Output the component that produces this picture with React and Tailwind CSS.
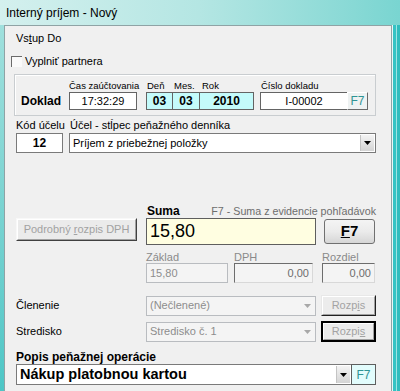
import React from "react";

function Tri({ color = "#000" }) {
  return (
    <svg width="7" height="4" viewBox="0 0 7 4">
      <path d="M0 0h7L3.5 4z" fill={color} />
    </svg>
  );
}

function ArrowBtn() {
  return (
    <div className="w-[14px] my-[1px] mr-[1px] flex items-center justify-center bg-gradient-to-b from-[#f4f4f4] to-[#d4d4d4] border-l border-[#c4c4c4]">
      <Tri />
    </div>
  );
}

function Label({ children, className = "" }) {
  return <div className={"h-[12px] leading-[12px] text-[9.5px] whitespace-nowrap " + className}>{children}</div>;
}

function DisabledCombo({ text }) {
  return (
    <div className="flex h-[20px] w-[170px] bg-[#f4f4f4] border border-[#b9bcc0]">
      <div className="flex-1 flex items-center pl-[3px] text-[#8d8d8d]">{text}</div>
      <div className="w-[16px] flex items-center justify-center">
        <Tri color="#a8a8a8" />
      </div>
    </div>
  );
}

function RozpisBtn({ focused }) {
  return (
    <div
      className={
        "ml-[5px] w-[55px] h-[21px] flex items-center justify-center text-[#a3a3a3] bg-[#ececec] " +
        (focused
          ? "border-2 border-black"
          : "border border-t-[#e8e8e8] border-l-[#e8e8e8] border-b-[#202020] border-r-[#202020]")
      }
    >
      <span className="h-full w-full flex items-center justify-center border border-t-white border-l-white border-b-[#a0a0a0] border-r-[#a0a0a0]">
        {focused ? (
          <>
            Rozpi<span className="underline">s</span>
          </>
        ) : (
          <>
            Rozp<span className="underline">i</span>s
          </>
        )}
      </span>
    </div>
  );
}

export default function App() {
  return (
    <div className="w-[400px] h-[391px] overflow-hidden flex flex-col bg-[#4fc8c8] font-['Liberation_Sans',Arial,sans-serif] text-[11px] text-black">
      <div className="h-[25px] shrink-0 flex items-center pl-[6px] bg-gradient-to-r from-[#d4f0ee] via-[#b4e6e3] to-[#79d5d1]">
        <span className="text-[12px] leading-none">Interný príjem - Nový</span>
      </div>

      <div className="flex flex-1 min-h-0">
        <div className="w-[4px] bg-gradient-to-b from-[#9fe0dd] to-[#4cc6c6]" />

        <div className="w-[388px] bg-[#f0f0f0] border-t border-l border-r border-[#8fa3a5] flex flex-col">
          <div className="mt-[6px] ml-[11px] h-[13px] leading-[13px]">
            Vs<span className="underline">t</span>up Do
          </div>

          <div className="mt-[10px] h-[13px] flex items-center">
            <div className="ml-[6px] w-[11px] h-[11px] bg-[#fafafa] border-t border-l border-[#6b6b6b]" />
            <span className="ml-[3px]">Vyplniť partnera</span>
          </div>

          <div className="mt-[6px] ml-[9px] w-[362px] h-[42px] border border-[#c9cdd0] shadow-[inset_1px_1px_0_#ffffff] flex items-start pt-[5px]">
            <div className="ml-[6px] w-[40px] flex flex-col">
              <div className="h-[12px]" />
              <div className="h-[18px] flex items-center font-bold text-[12px]">Doklad</div>
            </div>

            <div className="ml-[8px] w-[68px] flex flex-col">
              <Label>Čas zaúčtovania</Label>
              <div className="h-[18px] bg-white border border-[#646464] flex items-center justify-center text-[11px]">
                17:32:29
              </div>
            </div>

            <div className="ml-[9px] flex">
              <div className="w-[27px] flex flex-col">
                <Label className="pl-[1px]">Deň</Label>
                <div className="h-[18px] bg-[#c4fbfb] border border-[#646464] flex items-center justify-center font-bold text-[12px]">03</div>
              </div>
              <div className="w-[28px] -ml-[1px] flex flex-col">
                <Label className="pl-[2px]">Mes.</Label>
                <div className="h-[18px] bg-[#c4fbfb] border border-[#646464] flex items-center justify-center font-bold text-[12px]">03</div>
              </div>
              <div className="w-[55px] -ml-[1px] flex flex-col">
                <Label className="pl-[3px]">Rok</Label>
                <div className="h-[18px] bg-[#c4fbfb] border border-[#646464] flex items-center justify-center font-bold text-[12px]">2010</div>
              </div>
            </div>

            <div className="ml-[6px] flex flex-col">
              <Label className="pl-[1px]">Číslo dokladu</Label>
              <div className="flex h-[18px]">
                <div className="w-[88px] bg-white border border-[#646464] flex items-center justify-center">I-00002</div>
                <div className="w-[21px] -ml-[1px] bg-[#eef2f2] border border-t-white border-l-white border-b-[#6a6a6a] border-r-[#6a6a6a] flex items-center justify-center text-[#2e9494] text-[12px]">
                  F7
                </div>
              </div>
            </div>
          </div>

          <div className="mt-[3px] h-[12px] leading-[12px] flex">
            <span className="ml-[11px] w-[54px]">Kód účelu</span>
            <span>Účel - stĺpec peňažného denníka</span>
          </div>

          <div className="mt-[2px] flex">
            <div className="ml-[11px] w-[47px] h-[20px] bg-white border border-[#7a7a7a] flex items-center justify-center font-bold text-[12px]">
              12
            </div>
            <div className="ml-[6px] flex h-[20px] w-[307px] bg-white border border-[#7a7a7a]">
              <div className="flex-1 flex items-center pl-[3px]">Príjem z priebežnej položky</div>
              <ArrowBtn />
            </div>
          </div>

          <div className="mt-[52px] h-[13px] leading-[13px] w-[371px] flex">
            <span className="ml-[142px] font-bold text-[12px]">Suma</span>
            <span className="ml-auto text-[#6d6d6d] text-[10.7px]">F7 - Suma z evidencie pohľadávok</span>
          </div>

          <div className="flex items-start h-[27px]">
            <div className="ml-[11px] w-[121px] h-[23px] bg-[#ebebeb] border border-t-[#f8f8f8] border-l-[#f8f8f8] border-b-[#404040] border-r-[#404040]">
              <div className="h-full w-full flex items-center justify-center text-[#a2a2a2] border border-t-white border-l-white border-b-[#a0a0a0] border-r-[#a0a0a0]">
                Podrobný <span className="underline ml-[3px]">r</span>ozpis DPH
              </div>
            </div>
            <div className="ml-[9px] w-[170px] h-[27px] bg-[#fffee1] border border-[#5e5e5e] flex items-center pl-[3px] text-[18px]">
              15,80
            </div>
            <div className="ml-[8px] mt-[1px] w-[51px] h-[25px] rounded-[3px] border border-[#707070] bg-gradient-to-b from-[#f4f4f4] via-[#ebebeb] to-[#d6d6d6] flex items-center justify-center font-bold text-[15px]">
              <span className="underline">F</span>7
            </div>
          </div>

          <div className="mt-[6px] h-[12px] leading-[12px] flex text-[#8a8a8a]">
            <span className="ml-[141px] w-[88px]">Základ</span>
            <span className="w-[88px]">DPH</span>
            <span>Rozdiel</span>
          </div>

          <div className="flex h-[20px]">
            <div className="ml-[141px] w-[82px] bg-[#f4f4f4] border border-[#b9bcc0] flex items-center pl-[3px] text-[#8d8d8d]">
              15,80
            </div>
            <div className="ml-[6px] w-[79px] bg-[#f4f4f4] border border-t-[#6d6d6d] border-l-[#6d6d6d] border-b-[#d8d8d8] border-r-[#d8d8d8] flex items-center justify-end pr-[3px] text-[#6d6d6d]">
              0,00
            </div>
            <div className="ml-[9px] w-[53px] bg-[#f4f4f4] border border-t-[#6d6d6d] border-l-[#6d6d6d] border-b-[#d8d8d8] border-r-[#d8d8d8] flex items-center justify-end pr-[3px] text-[#6d6d6d]">
              0,00
            </div>
          </div>

          <div className="mt-[12px] h-[21px] flex items-center">
            <span className="ml-[11px] w-[130px]">Členenie</span>
            <DisabledCombo text="(Nečlenené)" />
            <RozpisBtn />
          </div>

          <div className="mt-[5px] h-[21px] flex items-center">
            <span className="ml-[11px] w-[130px]">Stredisko</span>
            <DisabledCombo text="Stredisko č. 1" />
            <RozpisBtn focused />
          </div>

          <div className="mt-[8px] h-[14px] leading-[14px] ml-[11px] font-bold text-[12px]">Popis peňažnej operácie</div>

          <div className="flex h-[21px]">
            <div className="ml-[11px] w-[336px] flex bg-white border border-[#7a7a7a]">
              <div className="flex-1 flex items-center pl-[3px] font-bold text-[14.5px]">Nákup platobnou kartou</div>
              <ArrowBtn />
            </div>
            <div className="w-[25px] -ml-[1px] bg-[#e2fcfc] border border-[#5e5e5e] flex items-center justify-center text-[#2e9494] text-[12px]">
              F7
            </div>
          </div>
        </div>

        <div className="flex-1 flex">
          <div className="w-[1px] bg-[#e6f7f7]" />
          <div className="w-[3px] bg-[#34c3c4]" />
          <div className="w-[1px] bg-[#9fe3e3]" />
          <div className="flex-1 bg-[#2fbcbd]" />
        </div>
      </div>
    </div>
  );
}
